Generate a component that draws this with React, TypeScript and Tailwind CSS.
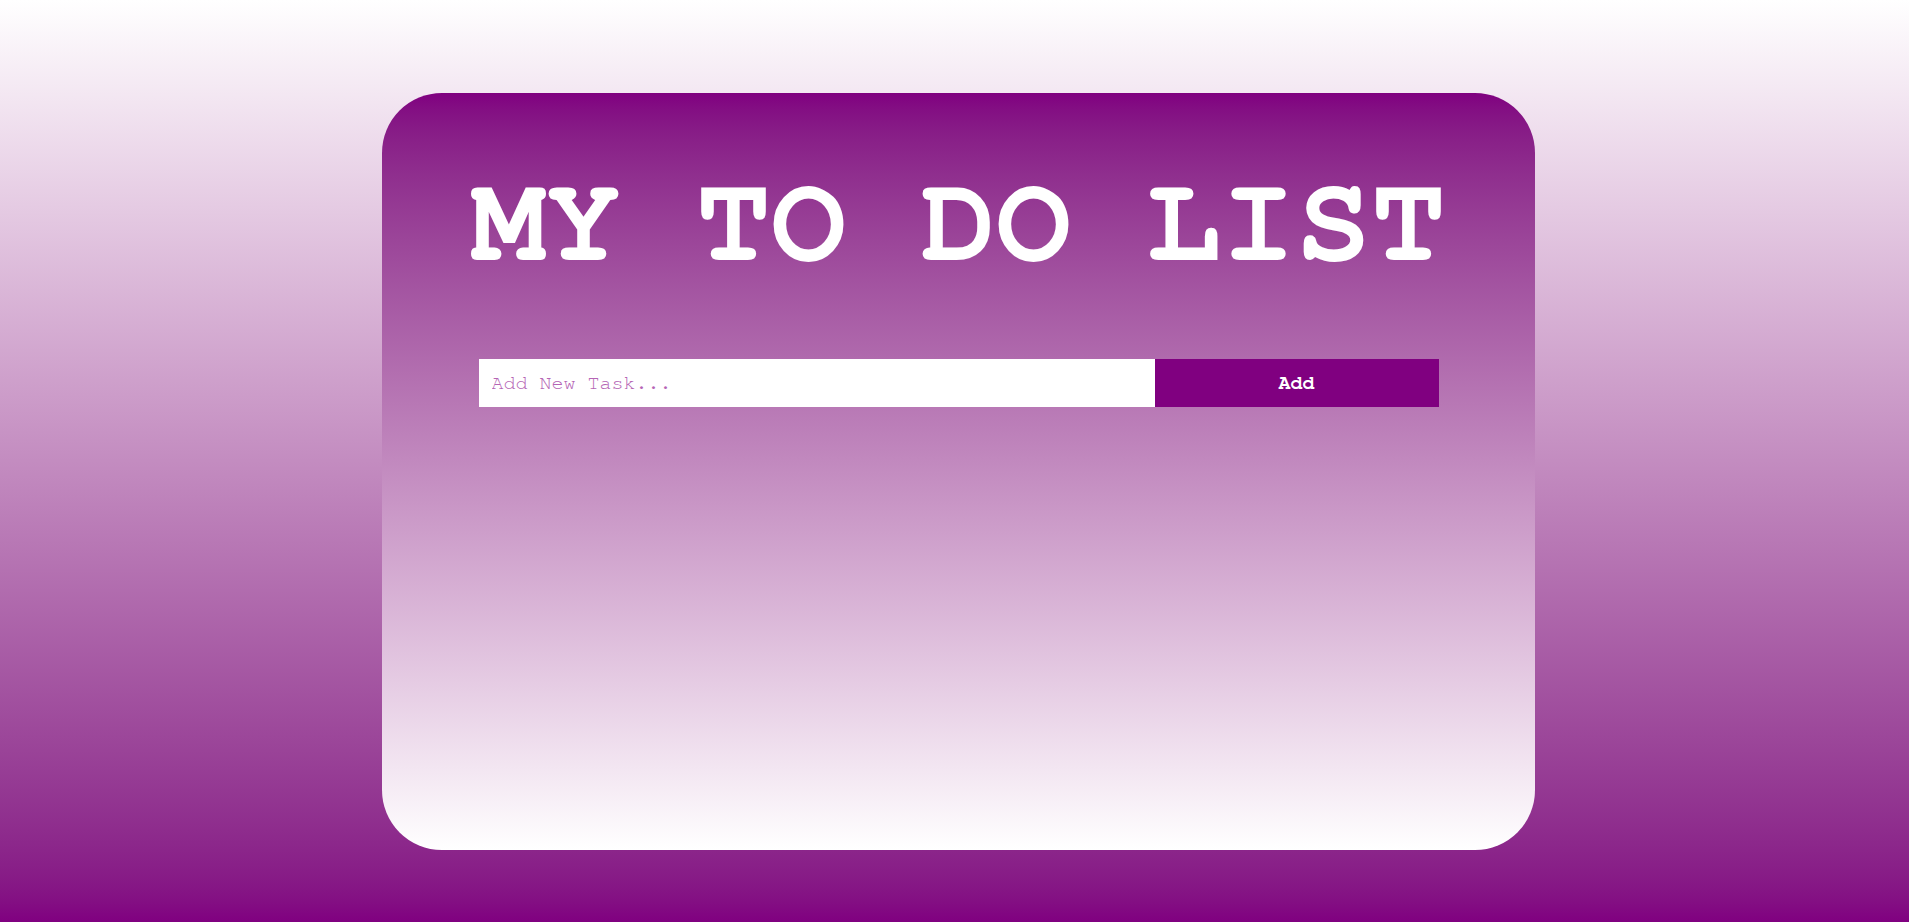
import { useState } from 'react';

export default function App() {
  const [tasks, setTasks] = useState<string[]>([]);
  const [text, setText] = useState('');

  const add = () => {
    if (!text.trim()) return;
    setTasks((t) => [...t, text.trim()]);
    setText('');
  };

  return (
    <div className="min-h-screen bg-gradient-to-b from-white to-[#800080] pt-[93px] pb-[72px] font-['Nimbus_Mono_PS','Nimbus_Mono_L','FreeMono','Courier_10_Pitch','Courier_New','Liberation_Mono',monospace]">
      <div className="ml-[382px] flex h-[757px] w-[1153px] flex-col items-center rounded-[60px] bg-gradient-to-b from-[#800080] to-white">
        <h1 className="mt-[67px] text-[125px] font-bold leading-none text-white">MY TO DO LIST</h1>

        <div className="mt-[74px] flex h-[48px] w-[960px]">
          <input
            value={text}
            onChange={(e) => setText(e.target.value)}
            placeholder="Add New Task..."
            className="h-full w-[676px] bg-white px-[13px] text-[20px] text-[#800080] outline-none placeholder:text-[#b565b5]"
          />
          <button
            type="button"
            onClick={add}
            className="h-full flex-1 bg-[#800080] text-[20px] font-bold text-white"
          >
            Add
          </button>
        </div>

        <ul className="mt-4 w-[960px]">
          {tasks.map((t, i) => (
            <li key={i} className="py-2 text-[20px] text-white">
              {t}
            </li>
          ))}
        </ul>
      </div>
    </div>
  );
}
